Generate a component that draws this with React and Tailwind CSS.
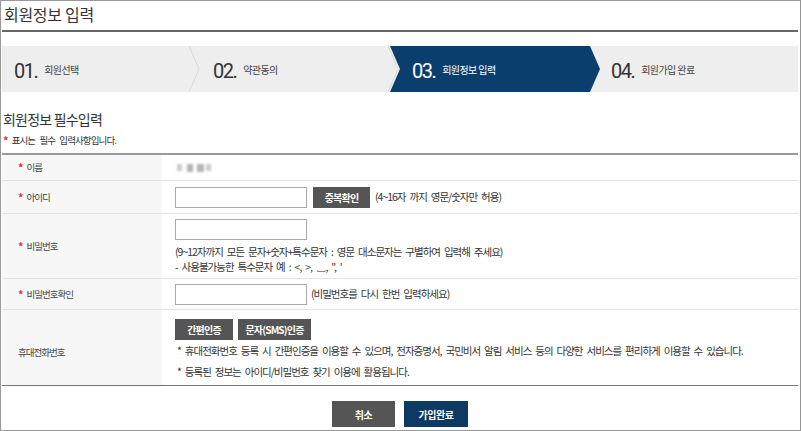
import React from "react";

const steps = [
  { n: "01.", t: "회원선택" },
  { n: "02.", t: "약관동의" },
  { n: "03.", t: "회원정보 입력", active: true },
  { n: "04.", t: "회원가입 완료" },
];

function Star() {
  return <span className="text-[#e2343f] font-bold text-[11px] mr-[4px] leading-none">*</span>;
}

function Row({ label, req, h, children, last, labelClass = "" }) {
  return (
    <div className={`flex ${h} ${last ? "border-b border-[#777]" : "border-b border-[#e3e3e3]"}`}>
      <div className={`w-[160px] bg-[#f7f7f7] flex items-center pl-[16px] text-[#444] text-[9.5px] tracking-[-1px] [word-spacing:3px] ${labelClass}`}>
        {req && <Star />}
        <span>{label}</span>
      </div>
      <div className="flex-1 pl-[13px] text-[10.5px] tracking-[-1px] [word-spacing:2.6px]">{children}</div>
    </div>
  );
}

function Input({ className = "" }) {
  return <div className={`w-[132px] h-[21px] border border-[#a9a9a9] bg-white shrink-0 ${className}`} />;
}

function GrayBtn({ children, className = "" }) {
  return (
    <div className={`h-[21px] bg-[#555] text-white font-bold flex items-center justify-center shrink-0 tracking-[-0.8px] [word-spacing:0px] ${className}`}>
      {children}
    </div>
  );
}

export default function App() {
  return (
    <div className="w-[801px] h-[431px] border border-[#999] pl-[1px] pr-[2px] bg-white text-[#333] font-['Noto_Sans_CJK_KR',sans-serif]">
      <div className="h-[31px] border-b-2 border-[#666] pl-[2px] text-[16px] tracking-[-0.3px] leading-[27px] text-[#333]">
        회원정보 입력
      </div>

      <div className="mt-[14px] h-[46px] bg-[#eeeeee] flex">
        {steps.map((s, i) => (
          <div key={i} className={`relative h-full flex items-center pl-[12px] ${i === 3 ? "flex-1" : "w-[199px]"}`}>
            {s.active && (
              <svg className="absolute left-[-10px] top-0" width="210" height="46" viewBox="0 0 210 46">
                <polygon points="0,0 200,0 210,23 200,46 0,46 10,23" fill="#0a3e6c" />
              </svg>
            )}
            {!s.active && i < 2 && (
              <svg className="absolute right-0 top-0" width="12" height="46" viewBox="0 0 12 46">
                <polyline points="0,0 10,23 0,46" fill="none" stroke="#dadada" strokeWidth="1" />
              </svg>
            )}
            <span className={`relative font-['Roboto',sans-serif] text-[20px] leading-[20px] tracking-[-1.5px] mt-[4px] ${s.active ? "text-white" : "text-[#333]"}`}>
              {s.n}
            </span>
            <span className={`relative ml-[7px] text-[10px] tracking-[-0.6px] ${s.active ? "text-white" : "text-[#444]"}`}>
              {s.t}
            </span>
          </div>
        ))}
      </div>

      <div className="mt-[18px] pl-[1px] text-[14px] leading-[18px] tracking-[-0.8px] text-[#333]">회원정보 필수입력</div>
      <div className="mt-[5px] pl-[1px] leading-[14px] flex items-center text-[9.5px] tracking-[-0.9px] [word-spacing:3px]">
        <Star />
        <span>표시는 필수 입력사항입니다.</span>
      </div>

      <div className="mt-[6px] border-t-2 border-[#999]">
        <Row label="이름" req h="h-[26px]">
          <div className="h-full flex items-center pl-[2px]">
            <span className="w-[5px] h-[7px] bg-[#ccc] blur-[1px]" />
            <span className="w-[6px] h-[8px] bg-[#b5b5b5] blur-[1px] ml-[5px]" />
            <span className="w-[7px] h-[8px] bg-[#b5b5b5] blur-[1px] ml-[4px]" />
            <span className="w-[5px] h-[7px] bg-[#ccc] blur-[1px] ml-[2px]" />
          </div>
        </Row>
        <Row label="아이디" req h="h-[33px]">
          <div className="h-full flex items-center">
            <Input />
            <GrayBtn className="w-[57px] ml-[6px] text-[10px]">중복확인</GrayBtn>
            <span className="ml-[5px]">(4~16자 까지 영문/숫자만 허용)</span>
          </div>
        </Row>
        <Row label="비밀번호" req h="h-[65px]">
          <div className="pt-[5px] flex flex-col">
            <Input />
            <div className="mt-[4px] leading-[15px]">(9~12자까지 모든 문자+숫자+특수문자 : 영문 대소문자는 구별하여 입력해 주세요)</div>
            <div className="leading-[15px]">- 사용불가능한 특수문자 예 : &lt;, &gt;, ␣, ", '</div>
          </div>
        </Row>
        <Row label="비밀번호확인" req h="h-[31px]">
          <div className="h-full flex items-center">
            <Input />
            <span className="ml-[4px]">(비밀번호를 다시 한번 입력하세요)</span>
          </div>
        </Row>
        <Row label="휴대전화번호" h="h-[76px]" last labelClass="pt-[10px]">
          <div className="pt-[9px] flex flex-col">
            <div className="flex gap-[5px]">
              <GrayBtn className="w-[58px] text-[10px]">간편인증</GrayBtn>
              <GrayBtn className="w-[73px] text-[10px]">문자(SMS)인증</GrayBtn>
            </div>
            <div className="mt-[4px] leading-[14px] pl-[2px] whitespace-nowrap">* 휴대전화번호 등록 시 간편인증을 이용할 수 있으며, 전자증명서, 국민비서 알림 서비스 등의 다양한 서비스를 편리하게 이용할 수 있습니다.</div>
            <div className="mt-[7px] leading-[14px] pl-[2px]">* 등록된 정보는 아이디/비밀번호 찾기 이용에 활용됩니다.</div>
          </div>
        </Row>
      </div>

      <div className="mt-[15px] flex justify-center gap-[9px] text-[10px] font-bold text-white tracking-[-0.5px]">
        <div className="w-[63px] h-[26px] bg-[#555] flex items-center justify-center">취소</div>
        <div className="w-[64px] h-[26px] bg-[#0d3a63] flex items-center justify-center">가입완료</div>
      </div>
    </div>
  );
}
